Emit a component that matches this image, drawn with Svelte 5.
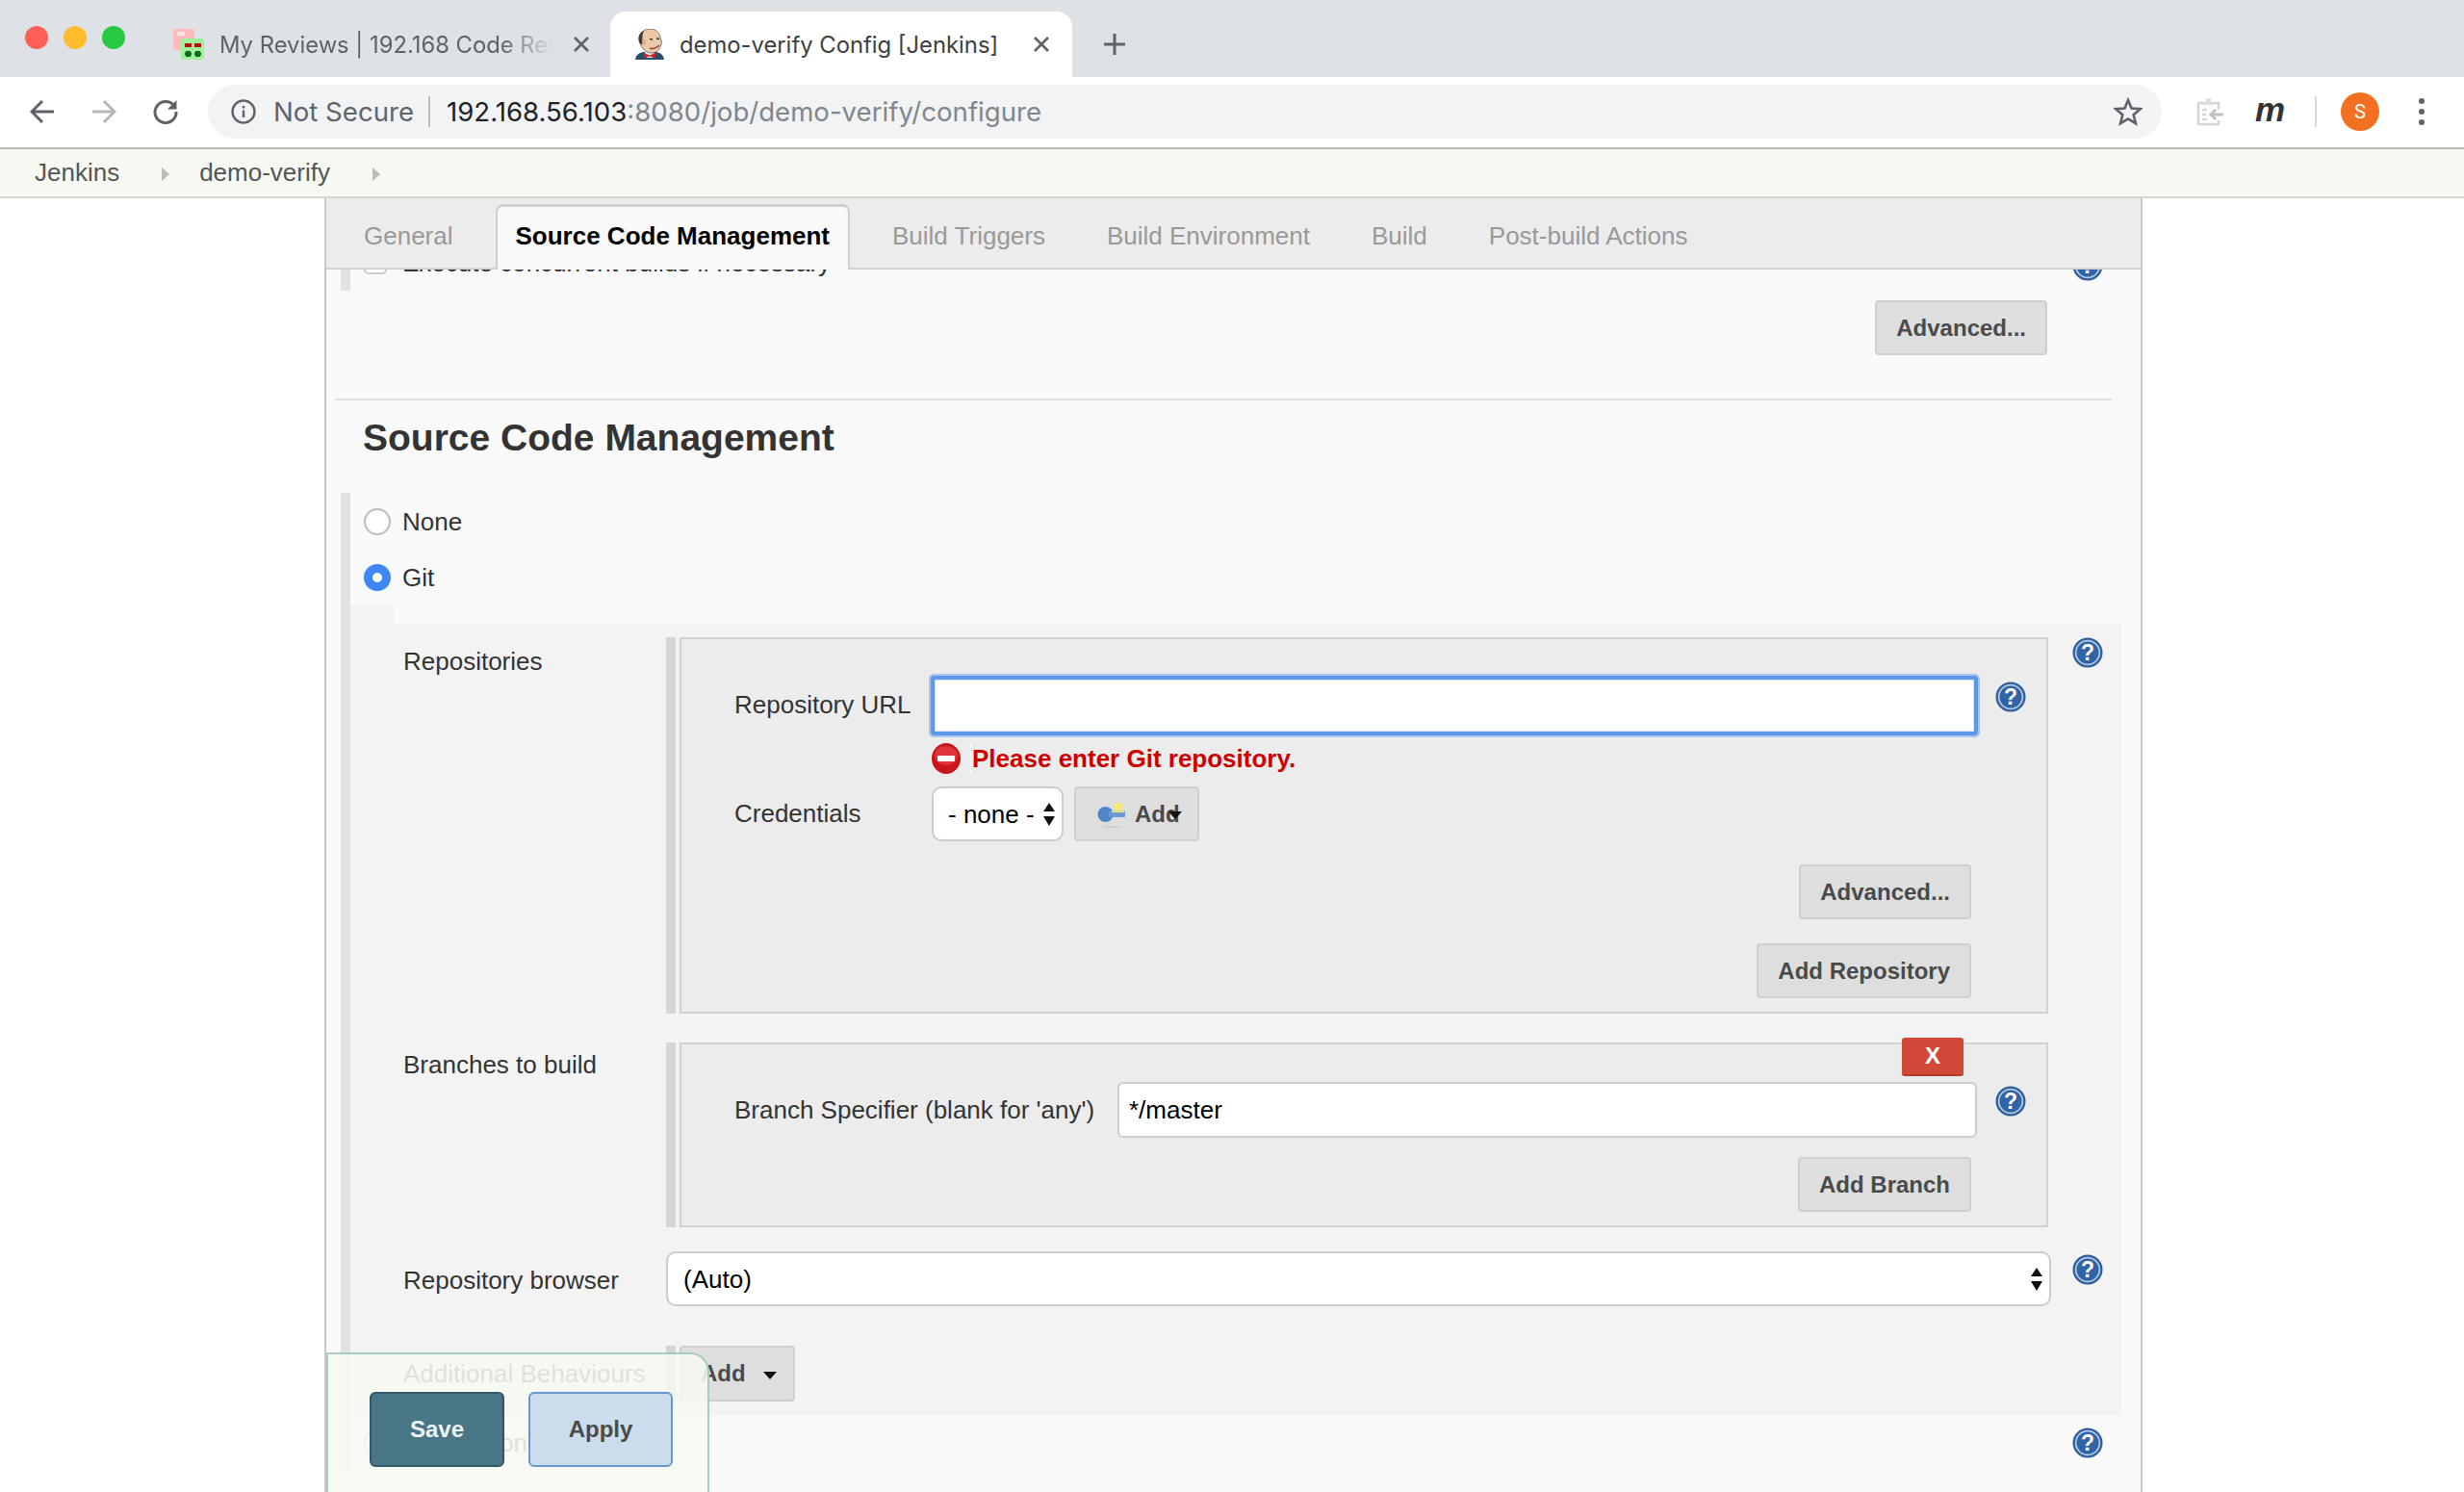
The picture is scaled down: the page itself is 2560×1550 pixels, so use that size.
<script>
	const chromeTabs = ['General', 'Source Code Management', 'Build Triggers', 'Build Environment', 'Build', 'Post-build Actions'];
	const activeTab = 'Source Code Management';
</script>

{#snippet help()}
	<svg class="help" viewBox="0 0 32 32" aria-hidden="true">
		<circle cx="16" cy="16" r="15.5" fill="#2f5f9e" />
		<circle cx="16" cy="16" r="13.2" fill="#b5cbe2" />
		<circle cx="16" cy="16" r="11.5" fill="#2f64a6" />
		<text x="16" y="24" text-anchor="middle" class="help-mark">?</text>
	</svg>
{/snippet}

{#snippet spinner()}
	<svg class="spinner" viewBox="0 0 14 26" aria-hidden="true">
		<path d="M7 1 L13 10 L1 10 Z M1 15 L13 15 L7 25 Z" fill="#111" />
	</svg>
{/snippet}

<div class="browser">
	<div class="tabstrip">
		<div class="lights">
			<span class="light red"></span>
			<span class="light yellow"></span>
			<span class="light green"></span>
		</div>
		<div class="tab first">
			<svg class="favicon" viewBox="0 0 33 32" aria-hidden="true">
				<rect x="1" y="0" width="22" height="22" rx="2" fill="#fdbcbc" />
				<rect x="5" y="3" width="8" height="4" fill="#fde0e0" />
				<rect x="9" y="10" width="24" height="22" rx="3" fill="#9df29a" />
				<rect x="13" y="15" width="7" height="4" fill="#b80f0f" />
				<rect x="23" y="15" width="7" height="4" fill="#b80f0f" />
				<path d="M14 23h5v6h-5z M24 23h5v6h-5z M13 24.500h7v3h-7z M23 24.500h7v3h-7z" fill="#0d6b1c" />
			</svg>
			<span class="tab-title faded">My Reviews | 192.168 Code Review</span>
			<svg class="tab-close" viewBox="0 0 18 18" aria-hidden="true"><path d="M2 2 L16 16 M16 2 L2 16" /></svg>
		</div>
		<div class="tab active">
			<svg class="favicon" viewBox="0 0 30 32" aria-hidden="true">
				<path d="M0 33 C0 27 4 25 8 24 L22 24 C27 25 30 28 30 33 Z" fill="#2b4d6b" />
				<path d="M10 24 L20 24 L18 30 L12 30 Z" fill="#eee" />
				<path d="M9 25 L15 27.500 L21 25 L21 30 L15 28.500 L9 30 Z" fill="#d0281f" />
				<path d="M5 10 C5 3 10 0 15 0 C21 0 25 3 26 9 C27 12 28 14 27 16 C26 20 23 25 17 25 C11 25 6 20 5 14 Z" fill="#eccaa8" stroke="#6b5a4c" stroke-width="0.8" />
				<path d="M4 14 C2 8 5 3 9 2 C7 6 7 11 8 15 C7 17 5 16 4 14 Z" fill="#3f3b38" />
				<ellipse cx="9" cy="14" rx="2" ry="3" fill="#deb08c" />
				<path d="M15 10.500 L18 11 M22 10 L25 10.500" stroke="#333" stroke-width="1.300" fill="none" />
				<path d="M15 20 Q20 22 25 17" stroke="#8a4f3d" stroke-width="1.400" fill="none" />
			</svg>
			<span class="tab-title">demo-verify Config [Jenkins]</span>
			<svg class="tab-close" viewBox="0 0 18 18" aria-hidden="true"><path d="M2 2 L16 16 M16 2 L2 16" /></svg>
		</div>
		<svg class="new-tab" viewBox="0 0 24 24" aria-hidden="true"><path d="M12 1 V23 M1 12 H23" /></svg>
	</div>

	<div class="toolbar">
		<svg class="nav" viewBox="0 0 26 26" aria-hidden="true"><path d="M25 13 H3 M13 2 L2 13 L13 24" /></svg>
		<svg class="nav forward" viewBox="0 0 26 26" aria-hidden="true"><path d="M1 13 H23 M13 2 L24 13 L13 24" /></svg>
		<svg class="nav" viewBox="0 0 26 26" aria-hidden="true"><path d="M22.500 8 A11 11 0 1 0 24 13" /><path class="solid" d="M24.500 1 V10.500 H15 Z" /></svg>
		<div class="omnibox">
			<svg class="info" viewBox="0 0 26 26" aria-hidden="true">
				<circle cx="13" cy="13" r="11.500" />
				<path d="M13 11.500 V19 M13 7 V9.500" />
			</svg>
			<span class="not-secure">Not Secure</span>
			<span class="omni-divider"></span>
			<span class="url"><b>192.168.56.103</b>:8080/job/demo-verify/configure</span>
			<svg class="star" viewBox="0 0 30 30" aria-hidden="true"><path d="M15 3 L18.500 11.500 L27.700 12.200 L20.700 18.200 L22.900 27.200 L15 22.400 L7.100 27.200 L9.300 18.200 L2.300 12.200 L11.500 11.500 Z" /></svg>
		</div>
		<div class="extensions">
			<svg class="clip" viewBox="0 0 30 30" aria-hidden="true">
				<path d="M7 6 H2 V28 H23 V24 M23 13 V6 H18" />
				<path class="clip-fill" d="M7 8 V5 H10 V1.500 H15 V5 H18 V8 Z" />
				<path d="M6 13 H11 M6 18 H10 M6 23 H11" />
				<path class="clip-arrow" d="M28 18 H16 M20 13 L15 18 L20 23" />
			</svg>
			<span class="ext-m">m</span>
			<span class="ext-divider"></span>
			<span class="avatar">S</span>
			<span class="kebab"><i></i><i></i><i></i></span>
		</div>
	</div>

	<div class="breadcrumbs">
		<span>Jenkins</span>
		<span class="crumb-arrow"></span>
		<span>demo-verify</span>
		<span class="crumb-arrow"></span>
	</div>

	<main class="page">
		<div class="panel">
			<div class="config-tabs">
				{#each chromeTabs as t}
					<div class="config-tab" class:current={t === activeTab}>{t}</div>
				{/each}
			</div>

			<div class="config-body">
				<div class="general-tail">
					<div class="check-row">
						<span class="checkbox"></span>
						<span>Execute concurrent builds if necessary</span>
						{@render help()}
					</div>
				</div>
				<div class="adv-line"><button class="btn">Advanced...</button></div>
				<hr class="section-rule" />
				<h2>Source Code Management</h2>

				<div class="scm">
					<label class="radio-row"><span class="radio"></span>None</label>
					<label class="radio-row"><span class="radio on"></span>Git</label>
					<div class="notch"></div>
					<div class="git-block">
						<div class="field-row repos">
							<div class="field-label">Repositories</div>
							<div class="repeat">
								<div class="repeat-box">
									<div class="inner-row url-row">
										<span class="inner-label">Repository URL</span>
										<input class="text focused" type="text" />
										{@render help()}
									</div>
									<div class="error-row">
										<svg class="err-icon" viewBox="0 0 30 32" aria-hidden="true">
											<ellipse cx="15" cy="16" rx="15" ry="16" fill="#c9151b" />
											<ellipse cx="15" cy="13" rx="12" ry="10" fill="#e0353a" />
											<rect x="6" y="13" width="18" height="6" rx="1" fill="#fff" />
										</svg>
										<span class="err-text">Please enter Git repository.</span>
									</div>
									<div class="cred-row">
										<span class="inner-label">Credentials</span>
										<div class="select-wrap cred-select">
											<select class="select"><option>- none -</option></select>
											{@render spinner()}
										</div>
										<button class="btn add-cred">
											<svg class="key" viewBox="0 0 30 28" aria-hidden="true">
												<ellipse cx="15" cy="27" rx="11" ry="1" fill="#cfcfcf" />
												<circle cx="22" cy="6" r="4.500" fill="#f4ec72" />
												<circle cx="8.500" cy="14" r="8" fill="#4f86c6" />
												<rect x="12" y="10.500" width="17" height="6.500" rx="1" fill="#6b9bd2" />
												<rect x="15" y="10.500" width="13" height="1.500" fill="#f4ec72" />
											</svg>
											<span>Add</span>
											<span class="caret over"></span>
										</button>
									</div>
									<div class="btn-line first"><button class="btn">Advanced...</button></div>
									<div class="btn-line"><button class="btn">Add Repository</button></div>
								</div>
							</div>
						</div>

						<div class="field-row branches">
							<div class="field-label">Branches to build</div>
							<div class="repeat">
								<div class="repeat-box">
									<button class="delete">X</button>
									<div class="inner-row branch-row">
										<span class="inner-label">Branch Specifier (blank for 'any')</span>
										<input class="text" type="text" value="*/master" />
										{@render help()}
									</div>
									<div class="btn-line branch-add"><button class="btn">Add Branch</button></div>
								</div>
							</div>
						</div>

						<div class="field-row browser-row">
							<div class="field-label">Repository browser</div>
							<div class="select-wrap wide">
								<select class="select"><option>(Auto)</option></select>
								{@render spinner()}
							</div>
						</div>

						<div class="field-row extras">
							<div class="field-label">Additional Behaviours</div>
							<div class="extras-bar">
								<button class="btn add-drop">Add <span class="caret"></span></button>
							</div>
						</div>

						<div class="outer-help first-help">{@render help()}</div>
						<div class="outer-help browser-help">{@render help()}</div>
					</div>
					<label class="radio-row last"><span class="radio"></span>Subversion {@render help()}</label>
				</div>
			</div>

			<div class="save-bar">
				<button class="save">Save</button>
				<button class="apply">Apply</button>
			</div>
		</div>
	</main>
</div>

<style>
	:global(body) {
		margin: 0;
		background: #fff;
		overflow: hidden;
	}

	.browser {
		width: 2560px;
		height: 1550px;
		display: flex;
		flex-direction: column;
		overflow: hidden;
		font-family: 'Liberation Sans', Arial, sans-serif;
		font-size: 26px;
		color: #333;
	}

	/* window chrome */
	.tabstrip {
		height: 80px;
		flex: none;
		background: #dee1e6;
		display: flex;
		align-items: flex-end;
		box-sizing: border-box;
	}

	.lights {
		display: flex;
		gap: 16px;
		margin: 0 0 29px 26px;
		width: 128px;
		flex: none;
		align-self: flex-end;
	}

	.light {
		width: 24px;
		height: 24px;
		border-radius: 50%;
	}

	.red { background: #ff5f57; }
	.yellow { background: #ffbd2e; }
	.green { background: #28c940; }

	.tab {
		height: 68px;
		display: flex;
		align-items: center;
		box-sizing: border-box;
		font-family: Inter, 'Liberation Sans', sans-serif;
		font-size: 23.8px;
		color: #5f6368;
		flex: none;
	}

	.tab.first {
		width: 455px;
		padding: 0 21px 0 0;
		margin-left: 25px;
		margin-right: 0;
	}

	.tab.active {
		width: 480px;
		padding: 0 23px 0 26px;
		background: #fff;
		color: #3c4043;
		border-radius: 16px 16px 0 0;
	}

	.favicon {
		flex: none;
		width: 33px;
		height: 32px;
	}

	.tab.active .favicon {
		width: 30px;
		margin-right: 16px;
	}

	.tab.first .favicon {
		margin-right: 16px;
	}

	.tab-title {
		flex: 1;
		white-space: nowrap;
		overflow: hidden;
	}

	.faded {
		-webkit-mask-image: linear-gradient(to right, #000 82%, transparent 98%);
		mask-image: linear-gradient(to right, #000 82%, transparent 98%);
	}

	.tab-close {
		flex: none;
		width: 18px;
		height: 18px;
		margin-left: 12px;
		fill: none;
		stroke: #5f6368;
		stroke-width: 2.6;
	}

	.new-tab {
		width: 24px;
		height: 24px;
		margin: 0 0 22px 32px;
		fill: none;
		stroke: #5f6368;
		stroke-width: 3;
	}

	.toolbar {
		height: 75px;
		flex: none;
		box-sizing: border-box;
		background: #fff;
		border-bottom: 2px solid #b8b8b8;
		display: flex;
		align-items: flex-start;
		padding: 8px 0 0 31px;
	}

	.nav {
		width: 26px;
		height: 26px;
		flex: none;
		margin: 15px 38px 0 0;
		fill: none;
		stroke: #5f6368;
		stroke-width: 3;
	}

	.nav.forward {
		stroke: #b4b7bb;
	}

	.nav .solid {
		fill: #5f6368;
		stroke: none;
	}

	.omnibox {
		width: 2030px;
		height: 56px;
		margin-left: -7px;
		flex: none;
		background: #f1f3f4;
		border-radius: 28px;
		display: flex;
		align-items: center;
		box-sizing: border-box;
		padding: 0 20px 0 24px;
		font-family: Inter, 'Liberation Sans', sans-serif;
		font-size: 27.6px;
	}

	.info {
		width: 26px;
		height: 26px;
		flex: none;
		margin-right: 18px;
		fill: none;
		stroke: #5f6368;
		stroke-width: 2.4;
	}

	.not-secure {
		color: #5f6368;
	}

	.omni-divider {
		width: 2px;
		height: 32px;
		background: #b9bcc0;
		margin: 0 17px 0 15px;
	}

	.url {
		color: #80868b;
		flex: 1;
		white-space: nowrap;
	}

	.url b {
		font-weight: 400;
		color: #202124;
	}

	.star {
		width: 30px;
		height: 30px;
		flex: none;
		fill: none;
		stroke: #5f6368;
		stroke-width: 2.6;
	}

	.extensions {
		display: flex;
		align-items: center;
		height: 56px;
		margin-left: 36px;
	}

	.clip {
		width: 30px;
		height: 30px;
		fill: none;
		stroke: #d5d5d5;
		stroke-width: 2.4;
	}

	.clip-fill {
		fill: #dcdcdc;
		stroke: none;
	}

	.clip-arrow {
		stroke: #c2c2c2;
		stroke-width: 3;
	}

	.ext-m {
		margin-left: 31px;
		width: 32px;
		font: italic 700 35px/1 'Liberation Sans', sans-serif;
		color: #333;
		position: relative;
		top: -3px;
	}

	.ext-divider {
		width: 2px;
		height: 32px;
		background: #d5d7da;
		margin-left: 30px;
	}

	.avatar {
		width: 40px;
		height: 40px;
		border-radius: 50%;
		background: #f36f21;
		color: #fff;
		margin-left: 25px;
		display: flex;
		align-items: center;
		justify-content: center;
		font-family: Roboto, sans-serif;
		font-size: 20px;
	}

	.kebab {
		display: flex;
		flex-direction: column;
		gap: 5px;
		margin-left: 41px;
	}

	.kebab i {
		width: 6px;
		height: 6px;
		border-radius: 50%;
		background: #5f6368;
	}

	.breadcrumbs {
		height: 51px;
		flex: none;
		box-sizing: border-box;
		background: #f6f9f2;
		border-bottom: 2px solid #d3d7cf;
		display: flex;
		align-items: center;
		padding-left: 36px;
		color: #555;
	}

	.crumb-arrow {
		width: 0;
		height: 0;
		border-left: 8px solid #bbb;
		border-top: 7px solid transparent;
		border-bottom: 7px solid transparent;
		margin: 2px 31px 0 44px;
	}

	/* jenkins page */
	.page {
		flex: 1;
		min-height: 0;
		padding-left: 337px;
	}

	.panel {
		position: relative;
		box-sizing: border-box;
		width: 1889px;
		height: 100%;
		border: solid #c8c8c8;
		border-width: 0 2px;
		background: #f9f9f9;
		display: flex;
		flex-direction: column;
	}

	.config-tabs {
		height: 74px;
		flex: none;
		box-sizing: border-box;
		position: relative;
		z-index: 1;
		background: #ececec;
		border-bottom: 2px solid #cfcfcf;
		display: flex;
		gap: 24px;
		padding-left: 19px;
		align-items: flex-end;
	}

	.config-tab {
		height: 66px;
		box-sizing: border-box;
		padding: 0 20px;
		display: flex;
		align-items: center;
		color: #999;
		white-space: nowrap;
	}

	.config-tab.current {
		background: #f9f9f9;
		border: solid #cfcfcf;
		border-width: 3px 2px 0;
		border-radius: 8px 8px 0 0;
		height: 68px;
		margin-bottom: -2px;
		padding: 0 19px 4px;
		color: #000;
		font-weight: 700;
	}

	.config-body {
		flex: 1;
		min-height: 0;
		overflow: hidden;
	}

	/* tail of the General section, scrolled mostly under the tab bar */
	.general-tail {
		margin: -25px 0 0 15px;
		height: 47px;
		border-left: 10px solid #e2e2e2;
	}

	.check-row {
		display: flex;
		align-items: center;
		height: 36px;
		gap: 16px;
		padding: 0 39px 0 14px;
	}

	.check-row .help {
		margin: 6px 0 0 auto;
	}

	.checkbox {
		width: 24px;
		height: 24px;
		box-sizing: border-box;
		border: 2px solid #ccc;
		border-radius: 5px;
		background: #fff;
	}

	.help {
		width: 32px;
		height: 32px;
		flex: none;
		display: block;
	}

	.help-mark {
		font: 700 23px 'Liberation Sans', sans-serif;
		fill: #fff;
	}

	.adv-line {
		margin-top: 10px;
		display: flex;
		justify-content: flex-end;
		padding-right: 97px;
	}

	.btn {
		height: 57px;
		box-sizing: border-box;
		padding: 0 20px;
		background: #dedede;
		border: 2px solid #cfcfcf;
		border-radius: 4px;
		font: 700 24px 'Liberation Sans', sans-serif;
		color: #4a4a4a;
		white-space: nowrap;
	}

	.section-rule {
		margin: 45px 30px 0 9px;
		border: none;
		height: 2px;
		background: #e0e0e0;
	}

	h2 {
		margin: 0;
		padding: 17px 0 0 38px;
		height: 79px;
		box-sizing: border-box;
		font-size: 39px;
		line-height: 44px;
		font-weight: 700;
		color: #333;
		margin-bottom: 17px;
	}

	.scm {
		margin-left: 15px;
		border-left: 10px solid #e2e2e2;
		height: 1016px;
		box-sizing: border-box;
		padding-top: 1px;
	}

	.radio-row {
		height: 58px;
		display: flex;
		align-items: center;
		gap: 12px;
		padding-left: 14px;
	}

	.radio-row.last {
		padding-right: 39px;
	}

	.radio-row.last .help {
		margin-left: auto;
	}

	.radio {
		width: 28px;
		height: 28px;
		box-sizing: border-box;
		border-radius: 50%;
		border: 2px solid #bdbdbd;
		background: #fff;
		flex: none;
	}

	.radio.on {
		border: 9px solid #3f87f5;
	}

	.notch {
		width: 46px;
		height: 19px;
		background: #f3f3f3;
	}

	.git-block {
		position: relative;
		width: 1840px;
		height: 822px;
		background: #f3f3f3;
		box-sizing: border-box;
		padding: 14px 0 0 55px;
	}

	.field-row {
		display: grid;
		grid-template-columns: 273px 1439px;
		align-items: start;
	}

	.field-label {
		padding-top: 10px;
		line-height: 30px;
	}

	.repeat {
		border-left: 10px solid #d5d5d5;
		padding-left: 4px;
		width: 1422px;
	}

	.repeat-box {
		position: relative;
		box-sizing: border-box;
		background: #ececec;
		border: 2px solid #d2d2d2;
	}

	.repos .repeat-box {
		height: 391px;
		padding-top: 36px;
	}

	.branches {
		margin-top: 30px;
	}

	.branches .field-label {
		padding-top: 8px;
	}

	.branches .repeat-box {
		height: 192px;
	}

	.inner-row {
		display: flex;
		align-items: center;
		padding-left: 55px;
	}

	.inner-label {
		white-space: nowrap;
		flex: none;
	}

	.url-row .inner-label {
		width: 202px;
		margin-top: -2px;
	}

	.url-row .help {
		margin: -18px 0 0 16px;
	}

	.text {
		box-sizing: border-box;
		height: 58px;
		background: #fff;
		border: 2px solid #ccc;
		border-radius: 6px;
		padding: 0 10px;
		font: 26px 'Liberation Sans', sans-serif;
		color: #000;
		outline: none;
	}

	.focused {
		width: 1092px;
		height: 66px;
		border: 6px solid #5e97e8;
		box-shadow: inset 0 0 0 1px #d3e2f8;
		outline: 2px solid #a9c6f2;
		outline-offset: -2px;
	}

	.error-row {
		display: flex;
		align-items: center;
		margin: 6px 0 0 260px;
		height: 32px;
	}

	.err-icon {
		width: 30px;
		height: 32px;
		flex: none;
	}

	.err-text {
		margin-left: 10px;
		padding-left: 1px;
		border-left: 1px solid #fff;
		height: 32px;
		line-height: 32px;
		font-weight: 700;
		color: #cc0000;
	}

	.cred-row {
		display: flex;
		align-items: center;
		margin-top: 13px;
		padding-left: 55px;
	}

	.cred-row .inner-label {
		width: 205px;
	}

	.select-wrap {
		position: relative;
	}

	.select {
		appearance: none;
		-webkit-appearance: none;
		width: 100%;
		height: 57px;
		box-sizing: border-box;
		display: block;
		background: #fff;
		border: 2px solid #ccc;
		border-radius: 10px;
		padding: 0 15px;
		font: 26px 'Liberation Sans', sans-serif;
		color: #000;
		outline: none;
	}

	.spinner {
		position: absolute;
		right: 8px;
		top: 16px;
		width: 14px;
		height: 26px;
	}

	.cred-select {
		width: 137px;
	}

	.add-cred {
		position: relative;
		width: 130px;
		margin-left: 11px;
		padding: 0 0 0 22px;
		display: flex;
		align-items: center;
		gap: 9px;
	}

	.key {
		width: 30px;
		height: 28px;
		flex: none;
	}

	.caret {
		display: inline-block;
		width: 0;
		height: 0;
		border-left: 7px solid transparent;
		border-right: 7px solid transparent;
		border-top: 8px solid #111;
		vertical-align: middle;
		margin-left: 12px;
	}

	.caret.over {
		position: absolute;
		left: 96px;
		top: 24px;
		margin: 0;
	}

	.btn-line {
		display: flex;
		justify-content: flex-end;
		padding-right: 78px;
		margin-top: 25px;
	}

	.btn-line.first {
		margin-top: 24px;
	}

	.delete {
		position: absolute;
		right: 86px;
		top: -7px;
		width: 64px;
		height: 40px;
		box-sizing: border-box;
		background: #d24939;
		border: none;
		border-bottom: 2px solid #b53a2d;
		border-radius: 3px;
		color: #fff;
		font: 700 24px 'Liberation Sans', sans-serif;
	}

	.branch-row {
		padding-top: 39px;
	}

	.branch-row .inner-label {
		width: 398px;
	}

	.branch-row .text {
		width: 893px;
	}

	.branch-row .help {
		margin: -18px 0 0 19px;
	}

	.branch-add {
		margin-top: 20px;
	}

	.browser-row {
		margin-top: 25px;
	}

	.browser-row .field-label {
		padding-top: 15px;
	}

	.wide .select {
		padding: 0 16px;
	}

	.extras {
		margin-top: 41px;
	}

	.extras .field-label {
		padding-top: 14px;
	}

	.extras-bar {
		border-left: 10px solid #d5d5d5;
		padding: 0 0 4px 4px;
		justify-self: start;
	}

	.add-drop {
		width: 120px;
		height: 58px;
		padding: 0 0 0 20px;
		text-align: left;
	}

	.outer-help {
		position: absolute;
		right: 19px;
	}

	.first-help { top: 14px; }
	.browser-help { top: 655px; }

	/* bottom bar floats over the form */
	.save-bar {
		position: absolute;
		z-index: 2;
		left: 0;
		bottom: 0;
		width: 398px;
		height: 145px;
		box-sizing: border-box;
		background: rgba(245, 249, 241, 0.88);
		border: solid #a9cdb9;
		border-width: 2px 2px 0 2px;
		border-radius: 0 20px 0 0;
		padding: 39px 0 0 43px;
		display: flex;
		align-items: flex-start;
		gap: 25px;
	}

	.save,
	.apply {
		height: 78px;
		box-sizing: border-box;
		border-radius: 6px;
		font: 700 24px 'Liberation Sans', sans-serif;
	}

	.save {
		width: 140px;
		background: #487686;
		border: 2px solid #2f5766;
		color: #eef3f5;
	}

	.apply {
		width: 150px;
		background: #cbdcec;
		border: 2px solid #6699cc;
		color: #4a4a4a;
	}
</style>
